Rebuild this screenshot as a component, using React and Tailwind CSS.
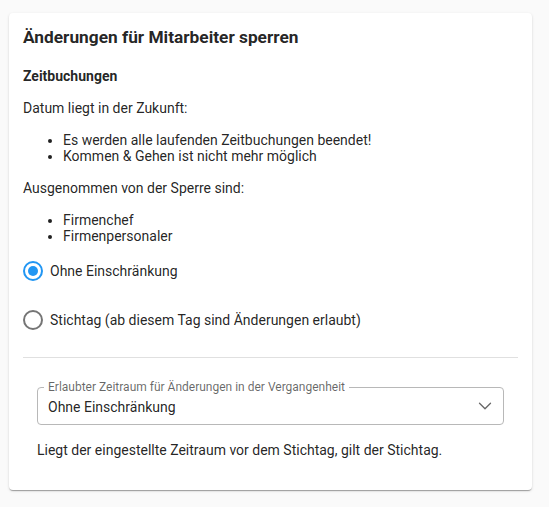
import React from "react";
import { ChevronDown } from "lucide-react";

function Radio({ checked }) {
  return (
    <svg width="20" height="20" viewBox="0 0 20 20" className="shrink-0">
      <circle
        cx="10"
        cy="10"
        r="9"
        fill="none"
        stroke={checked ? "#2196f3" : "#757575"}
        strokeWidth="2"
      />
      {checked && <circle cx="10" cy="10" r="5" fill="#2196f3" />}
    </svg>
  );
}

export default function App() {
  return (
    <div
      className="min-h-screen bg-[#fafafa] pt-[13px] pl-[9px] text-[rgba(0,0,0,0.87)]"
      style={{ fontFamily: "Roboto, 'Liberation Sans', sans-serif" }}
    >
      <div className="w-[523px] rounded-[4px] bg-white px-[14px] pt-[14px] pb-[32px] shadow-[0_2px_1px_-1px_rgba(0,0,0,0.2),0_1px_1px_0_rgba(0,0,0,0.14),0_1px_3px_0_rgba(0,0,0,0.12)]">
        <h2 className="text-[17.3px] leading-[21px] font-bold">
          Änderungen für Mitarbeiter sperren
        </h2>
        <div className="mt-[20px] text-[14px] leading-4 font-bold">Zeitbuchungen</div>
        <p className="mt-4 text-[14px] leading-4">Datum liegt in der Zukunft:</p>
        <ul className="mt-4 list-disc pl-10 text-[14px] leading-4">
          <li>Es werden alle laufenden Zeitbuchungen beendet!</li>
          <li>Kommen &amp; Gehen ist nicht mehr möglich</li>
        </ul>
        <p className="mt-4 text-[14px] leading-4">Ausgenommen von der Sperre sind:</p>
        <ul className="mt-4 list-disc pl-10 text-[14px] leading-4">
          <li>Firmenchef</li>
          <li>Firmenpersonaler</li>
        </ul>

        <div className="mt-2 flex h-[38px] items-center gap-[7px] text-[14px] leading-4">
          <Radio checked />
          <span>Ohne Einschränkung</span>
        </div>
        <div className="mt-[11px] flex h-[38px] items-center gap-[7px] text-[14px] leading-4">
          <Radio />
          <span>Stichtag (ab diesem Tag sind Änderungen erlaubt)</span>
        </div>

        <div className="mt-[18px] h-px bg-[#e0e0e0]" />

        <div className="px-[14px]">
          <div className="relative mt-[29px] flex h-[38px] items-center justify-between rounded-[4px] border border-[#b8b8b8] pl-[10px] pr-[7px]">
            <span className="absolute -top-[9px] left-[6px] bg-white px-[4px] text-[12px] leading-4 text-[rgba(0,0,0,0.6)]">
              Erlaubter Zeitraum für Änderungen in der Vergangenheit
            </span>
            <span className="mt-[2px] text-[14px] leading-4">Ohne Einschränkung</span>
            <ChevronDown size={22} strokeWidth={1.4} color="#666" />
          </div>
          <p className="mt-[17px] text-[14px] leading-4">
            Liegt der eingestellte Zeitraum vor dem Stichtag, gilt der Stichtag.
          </p>
        </div>
      </div>
    </div>
  );
}
